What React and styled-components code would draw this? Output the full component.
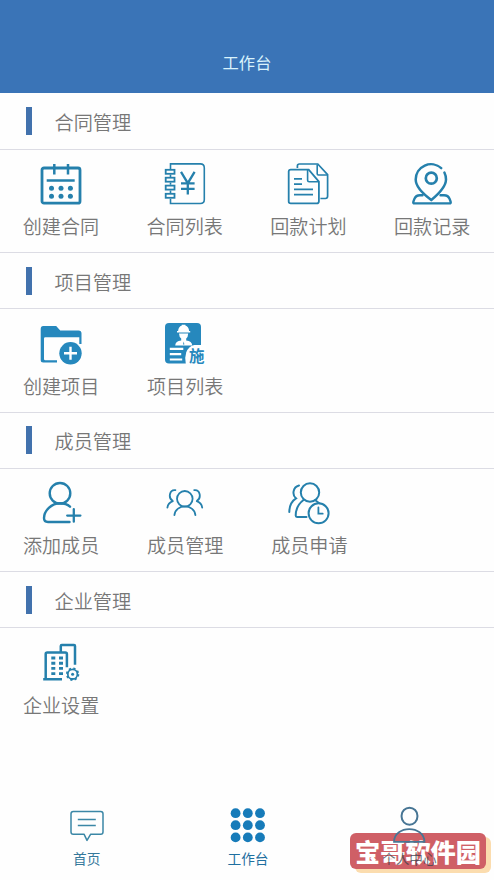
import React from "react";
import styled, { createGlobalStyle } from "styled-components";

const CalendarIcon = () => (
  <Icon viewBox="0 0 44 44">
    <rect x="3" y="6" width="38" height="35.2" rx="2" strokeWidth="2.8" />
    <path d="M15.3 2v10.5M29 2v10.5M7.7 18.4h28" strokeWidth="2.5" />
    <g fill="#2580ac" stroke="none">
      <circle cx="12.5" cy="26.2" r="2.5" />
      <circle cx="22" cy="26.2" r="2.5" />
      <circle cx="31.4" cy="26.2" r="2.5" />
      <circle cx="12.5" cy="34.2" r="2.5" />
      <circle cx="22" cy="34.2" r="2.5" />
      <circle cx="31.4" cy="34.2" r="2.5" />
    </g>
  </Icon>
);

const LedgerIcon = () => (
  <Icon viewBox="0 0 44 44">
    <path d="M7.5 7V1.9h29.8q4 0 4 4v31.6q0 4-4 4H7.5v-4.7M7.5 12.5v2.6M7.5 20.5v2.3M7.5 28.4v2.6" strokeWidth="1.6" />
    <g strokeWidth="1.8">
      <rect x="2.7" y="7.8" width="8.8" height="4" />
      <rect x="2.7" y="15.7" width="8.8" height="4" />
      <rect x="2.7" y="23.6" width="8.8" height="4" />
      <rect x="2.7" y="31.8" width="8.8" height="4" />
    </g>
    <path d="M18 9.8l6.8 11.4 6.8-11.4M24.8 21v11.5M18 21.4h13.6M18 26.8h13.6" strokeWidth="2.3" />
  </Icon>
);

const DocumentsIcon = () => (
  <Icon viewBox="0 0 44 44">
    <path d="M11.4 6V4q0-2 2-2h18.4l9.8 10.7v21.6q0 2.2-2.2 2.2h-5" strokeWidth="1.7" />
    <path d="M31.2 2.6v9.2q0 1.2 1.2 1.2h8.8" strokeWidth="1.6" />
    <path d="M4.7 7.6h18l10.2 12v19.6q0 2.2-2.2 2.2h-26q-2 0-2-2V9.6q0-2 2-2z" strokeWidth="1.8" />
    <path d="M21.6 8v10.2q0 1.6 1.6 1.6h9" strokeWidth="1.6" />
    <path d="M8 16.9h8M8 22.2h8M8 27.4h19M8 32.6h19" strokeWidth="1.8" />
  </Icon>
);

const PinIcon = () => (
  <Icon viewBox="0 0 44 44" strokeLinecap="round">
    <path d="M31.2 6.1A15.3 15.3 0 0 0 5.7 17.5C5.7 24 12.5 31.5 21.3 38 29.5 31.2 36 24 36 17.5q0-3.8-1.6-7" strokeWidth="2.5" />
    <circle cx="21.3" cy="16.2" r="5.5" strokeWidth="2.7" />
    <path d="M12.5 33.2H10q-4.2 0-5.6 3.7l-1 2.8q-.6 1.7 1.2 1.7h34.8q1.8 0 1.2-1.7l-1-2.8q-1.4-3.7-5.6-3.7h-3.5" strokeWidth="2.4" />
  </Icon>
);

const FolderIcon = () => (
  <Icon viewBox="0 0 44 44" stroke="none" fill="#2688bd">
    <path fillRule="evenodd" d="M4.2 4h13l4 4.5h18.3q3 0 3 3V22h-2.2v-6.7H6.3q-1.3 0-1.3 1.3v20.3q0 1.3 1.3 1.3H18v2.4H4.2q-2.5 0-2.5-2.5v-31Q1.7 4 4.2 4z" />
    <circle cx="31.5" cy="31.3" r="11.2" />
    <path d="M31.5 24.8v13M25 31.3h13" stroke="#fff" strokeWidth="2.4" />
  </Icon>
);

const WorkerIcon = () => (
  <Icon viewBox="0 0 44 44" stroke="none" fill="#2688bd">
    <rect x="2" y="1" width="36" height="40.5" rx="4" />
    <g fill="#fff">
      <path d="M14 10.4V9h1.1q.3-4.4 3.7-5.6V2.8h3.6v.6q3.4 1.2 3.7 5.6h1.1v1.4z" />
      <path d="M16 11.4h9.2q-.2 3.6-2 5.2v1.8q5.8.4 6 5H12.2q.2-4.6 6-5v-1.8q-2-1.6-2.2-5.2z" />
      <path d="M6.8 25.7h13.5v2.2H6.8zM6.8 31h11.4v2.2H6.8zM6.8 36.4h12.4v2.2H6.8z" />
      <path d="M22.8 42q-1.4-6 .4-11.5 2.4-6.5 8.2-7.5H43v19z" />
    </g>
    <path d="M20 22.4l.7-3 .7 3z" />
    <Glyph x="26" y="39.5">施</Glyph>
  </Icon>
);

const AddMemberIcon = () => (
  <Icon viewBox="0 0 44 44" strokeLinecap="round">
    <circle cx="21" cy="12.3" r="10.3" strokeWidth="2.4" />
    <path d="M31 25.7q-3.7-3.4-10-3.4C12.6 22.3 5 29.8 5 37q0 4 4 4h21.5" strokeWidth="2.4" />
    <path d="M34.8 28.2v12.5M28.2 34.6h13.2" strokeWidth="2.3" />
  </Icon>
);

const TeamIcon = () => (
  <Icon viewBox="0 0 44 44" strokeLinecap="round" strokeWidth="1.8">
    <circle cx="21.8" cy="17.8" r="7.8" />
    <path d="M11.4 34.2c1.2-11.7 19.8-11.7 21 0M12.4 9.2C6.6 8.4 4.8 16.6 9.6 19.8M9.8 20.2Q5 22 4.4 26.6M31.2 9.2c5.8-.8 7.6 7.4 2.8 10.6M33.8 20.2q4.8 1.8 5.4 6.4" />
  </Icon>
);

const PendingIcon = () => (
  <Icon viewBox="0 0 44 44" strokeLinecap="round" strokeWidth="2">
    <circle cx="23" cy="11.5" r="9.2" />
    <path d="M16.8 18.8C12 22.4 8.7 27.8 8.7 34.6q0 1.3 1.3 1.3h9.5M28.3 19.3l4 2.9M12 4.5C5.6 6.2 5 14.2 9 17.4 5 20 2.4 24.6 2.3 31" />
    <circle cx="31.6" cy="32.3" r="10" />
    <path d="M31.4 26.4v6.3h4.3" strokeWidth="1.8" />
  </Icon>
);

const BuildingIcon = () => (
  <Icon viewBox="0 0 44 44">
    <path d="M6.7 38V13q0-1.6 1.6-1.6h18q1.6 0 1.6 1.6v13.2M21.8 10.8V4.9q0-1 1-1H35q1 0 1 1V23.7M4.2 38.2H23" strokeWidth="2.5" />
    <path d="M12.3 17h4M20 17h4M12.3 22.3h4M20 22.3h4M12.3 27.4h4M20 27.4h4M12.3 32.6h4M20 32.6h4" strokeWidth="2.9" />
    <circle cx="33.6" cy="33.2" r="4.8" strokeWidth="1.8" />
    <circle cx="33.6" cy="33.2" r="5.8" strokeWidth="1.8" strokeDasharray="2.2 2.355" />
    <circle cx="33.6" cy="33.2" r="1.5" fill="#2580ac" stroke="none" />
  </Icon>
);

const HomeIcon = () => (
  <TabIcon viewBox="0 0 38 38">
    <path d="M5.3 5.5h27.4q2.3 0 2.3 2.3v18.1q0 2.3-2.3 2.3h-10L19 34.4l-3-6.2H5.3q-2.3 0-2.3-2.3V7.8q0-2.3 2.3-2.3z" strokeWidth="1.5" strokeLinejoin="round" />
    <path d="M9.8 13.4h18M9.8 19.4h18" strokeWidth="1.5" />
  </TabIcon>
);

const DotsIcon = () => (
  <TabIcon viewBox="0 0 38 38" fill="#177bb9" stroke="none">
    {[7.2, 19.2, 31.4].map((y) =>
      [6.6, 18.8, 31].map((x) => <circle key={`${x}-${y}`} cx={x} cy={y} r="4.9" />)
    )}
  </TabIcon>
);

const ProfileIcon = () => (
  <TabIcon viewBox="0 0 38 38" stroke="#477594">
    <rect x="11.6" y="1.7" width="15.8" height="17" rx="7.9" strokeWidth="2" />
    <path d="M4 35.8C4.5 18.8 34 18.8 34.5 35.8z" strokeWidth="1.7" />
  </TabIcon>
);

const sections = [
  {
    title: "合同管理",
    items: [
      { label: "创建合同", icon: <CalendarIcon /> },
      { label: "合同列表", icon: <LedgerIcon /> },
      { label: "回款计划", icon: <DocumentsIcon /> },
      { label: "回款记录", icon: <PinIcon /> },
    ],
  },
  {
    title: "项目管理",
    items: [
      { label: "创建项目", icon: <FolderIcon /> },
      { label: "项目列表", icon: <WorkerIcon /> },
    ],
  },
  {
    title: "成员管理",
    items: [
      { label: "添加成员", icon: <AddMemberIcon /> },
      { label: "成员管理", icon: <TeamIcon /> },
      { label: "成员申请", icon: <PendingIcon /> },
    ],
  },
  {
    title: "企业管理",
    items: [{ label: "企业设置", icon: <BuildingIcon /> }],
  },
];

const App = () => {
  return (
    <>
      <GlobalStyle />
      <Page>
        <Header>工作台</Header>
        <Main>
          {sections.map((section, index) => (
            <section key={section.title}>
              <SectionHead>
                <Marker />
                <h2>{section.title}</h2>
              </SectionHead>
              <Grid $last={index === sections.length - 1}>
                {section.items.map((item) => (
                  <Item key={item.label}>
                    {item.icon}
                    <span>{item.label}</span>
                  </Item>
                ))}
              </Grid>
            </section>
          ))}
        </Main>
        <Stamp>宝哥软件园</Stamp>
        <TabBar>
          <Tab>
            <HomeIcon />
            <span>首页</span>
          </Tab>
          <Tab $active>
            <DotsIcon />
            <span>工作台</span>
          </Tab>
          <Tab $muted>
            <ProfileIcon />
            <span>个人中心</span>
          </Tab>
        </TabBar>
      </Page>
    </>
  );
};

export default App;

const GlobalStyle = createGlobalStyle`
  * {
    box-sizing: border-box;
  }

  body {
    margin: 0;
    background: #fefefe;
    font-family: "Noto Sans CJK SC", sans-serif;
  }
`;

const Page = styled.div`
  position: relative;
  display: flex;
  flex-direction: column;
  width: 494px;
  height: 880px;
  overflow: hidden;
`;

const Header = styled.header`
  flex: none;
  display: flex;
  align-items: center;
  justify-content: center;
  height: 93px;
  padding-top: 31px;
  background: #3a74b7;
  color: #d9f3fc;
  font-size: 16.3px;
  line-height: 24px;
`;

const Main = styled.main`
  flex: 1;
  padding-top: 0.6px;
`;

const SectionHead = styled.div`
  display: flex;
  align-items: center;
  gap: 22.5px;
  height: 56px;
  padding-left: 26px;
  border-bottom: 1px solid #dcdce4;

  h2 {
    margin: 0;
    padding-top: 2px;
    color: #777;
    font-size: 19.2px;
    font-weight: 350;
    line-height: 28px;
  }
`;

const Marker = styled.i`
  width: 6px;
  height: 28px;
  background: #4272ad;
`;

const Grid = styled.div`
  display: flex;
  height: 103.6px;
  padding-top: 12.4px;
  border-bottom: ${({ $last }) => ($last ? "none" : "1px solid #dcdce4")};
  margin-left: -1px;
`;

const Item = styled.div`
  display: flex;
  flex-direction: column;
  align-items: center;
  gap: 6px;
  width: 124.15px;

  span {
    color: #777;
    font-size: 19.1px;
    font-weight: 350;
    line-height: 28px;
  }
`;

const Icon = styled.svg.attrs((props) => ({
  fill: props.fill || "none",
  stroke: props.stroke || "#2580ac",
}))`
  display: block;
  width: 44px;
  height: 44px;
`;

const Glyph = styled.text`
  font-size: 15.5px;
  font-weight: 700;
`;

const TabBar = styled.nav`
  position: relative;
  display: flex;
  height: 80px;
  padding: 6px 4px 0 6px;
`;

const Tab = styled.div`
  flex: 1;
  display: flex;
  flex-direction: column;
  align-items: center;
  gap: 4px;

  span {
    color: ${({ $active, $muted }) =>
      $muted ? "rgba(52, 62, 76, 0.72)" : $active ? "#1f6f9f" : "#35789b"};
    font-size: 13.7px;
    line-height: 20px;
  }
`;

const TabIcon = styled.svg.attrs((props) => ({
  fill: props.fill || "none",
  stroke: props.stroke || "#3b87a6",
}))`
  display: block;
  width: 38px;
  height: 38px;
`;

const Stamp = styled.div`
  position: absolute;
  left: 350px;
  top: 833px;
  width: 136px;
  height: 36px;
  border-radius: 6px;
  background: #cf5f66;
  box-shadow: 5px 4px 0 #fbdcae;
  color: #fff;
  font-size: 25.2px;
  font-weight: 900;
  line-height: 36px;
  text-align: center;
`;
